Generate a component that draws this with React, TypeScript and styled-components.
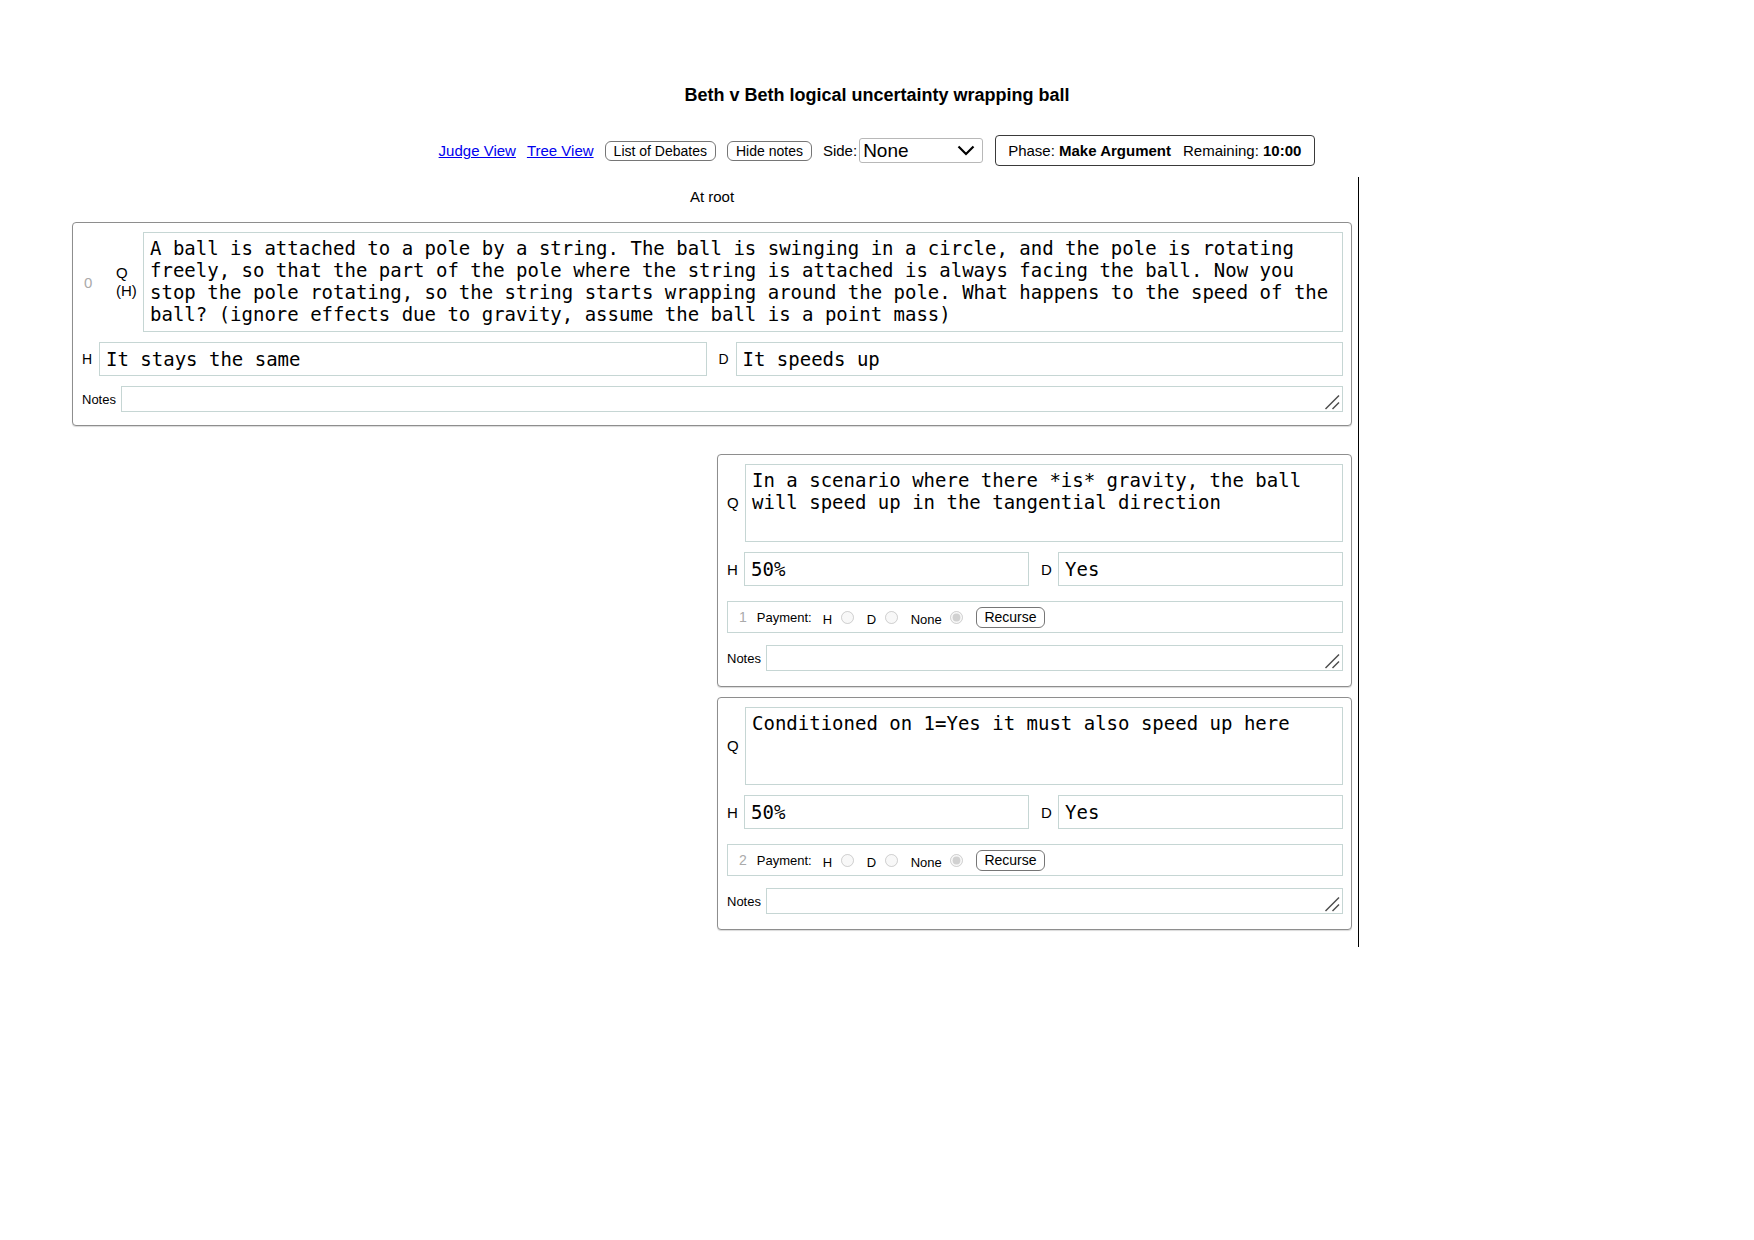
import styled, { createGlobalStyle } from "styled-components";

const GlobalStyle = createGlobalStyle`
  body {
    margin: 0;
    background: #fff;
    color: #000;
    font-family: "Liberation Sans", Arial, sans-serif;
  }
`;

const Page = styled.div`
  padding-top: 85px;
  width: 1754px;
`;

const Title = styled.h1`
  margin: 0;
  text-align: center;
  font-size: 18px;
  line-height: 21px;
  font-weight: 700;
`;

const Toolbar = styled.div`
  margin-top: 29px;
  display: flex;
  justify-content: center;
  align-items: center;
  gap: 11px;
  font-size: 15px;
  & > a {
    color: #0000ee;
    text-decoration: underline;
  }
`;

const PillButton = styled.button`
  height: 20px;
  padding: 0 8px;
  font-family: "Liberation Sans", Arial, sans-serif;
  font-size: 14px;
  color: #000;
  background: #fff;
  border: 1px solid #767676;
  border-radius: 6px;
`;

const SideGroup = styled.div`
  display: flex;
  align-items: center;
  gap: 2px;
`;

const SelectBox = styled.div`
  width: 124px;
  height: 25px;
  box-sizing: border-box;
  display: flex;
  align-items: center;
  justify-content: space-between;
  padding: 0 7px 0 3px;
  border: 1px solid #b8b8b8;
  border-radius: 3px;
  font-size: 19px;
`;

const PhaseBox = styled.div`
  margin-left: 1px;
  height: 31px;
  box-sizing: border-box;
  display: flex;
  align-items: center;
  padding: 0 13px 0 12px;
  border: 1.5px solid #3a3a3a;
  border-radius: 4px;
  font-size: 15px;
  b {
    font-weight: 700;
  }
  .remaining {
    margin-left: 12px;
  }
`;

const LeftColumn = styled.div`
  margin-top: 11px;
  margin-left: 64px;
  width: 1295px;
  box-sizing: border-box;
  padding: 0 6px 17px 8px;
  border-right: 1px solid #000;
`;

const AtRoot = styled.div`
  padding-top: 11px;
  text-align: center;
  font-size: 15px;
  line-height: 17px;
`;

const NodeBox = styled.div<{ $root?: boolean }>`
  margin-top: ${(p) => (p.$root ? "17px" : "0")};
  border: 1px solid #8e8e8e;
  border-radius: 4px;
  box-shadow: 0 1px 1px rgba(0, 0, 0, 0.15);
  padding: 9px 8px ${(p) => (p.$root ? 13 : 15)}px 9px;
  display: flex;
  flex-direction: column;
  background: #fff;
`;

const Children = styled.div`
  margin-top: 28px;
  padding-left: calc(50% + 5px);
  display: flex;
  flex-direction: column;
  gap: 10px;
`;

const Row = styled.div`
  display: flex;
  align-items: center;
`;

const IndexCell = styled.div`
  width: 34px;
  box-sizing: border-box;
  padding-left: 2px;
  color: #aaa;
  font-size: 15px;
`;

const QLabel = styled.div<{ $w: number }>`
  width: ${(p) => p.$w}px;
  flex-shrink: 0;
  font-size: 15px;
  line-height: 18px;
`;

const field = `
  box-sizing: border-box;
  border: 1px solid #c6d6d4;
  border-radius: 0;
  background: #fff;
  color: #000;
  outline: none;
`;

const QText = styled.textarea<{ $h: number }>`
  ${field}
  flex: 1;
  height: ${(p) => p.$h}px;
  padding: 4px 6px;
  margin: 0;
  font-family: "DejaVu Sans Mono", monospace;
  font-size: 19px;
  line-height: 22px;
  resize: none;
  overflow: hidden;
`;

const AnswerRow = styled.div`
  margin-top: 10px;
  display: grid;
  grid-template-columns: 1fr 1fr;
  column-gap: 12px;
`;

const SideLabel = styled.div<{ $small?: boolean }>`
  width: 17px;
  flex-shrink: 0;
  font-size: ${(p) => (p.$small ? 14 : 15)}px;
`;

const AnswerInput = styled.input`
  ${field}
  flex: 1;
  min-width: 0;
  height: 34px;
  margin: 0;
  padding: 0 6px;
  font-family: "DejaVu Sans Mono", monospace;
  font-size: 19px;
`;

const PaymentRow = styled.div`
  margin-top: 15px;
  height: 32px;
  box-sizing: border-box;
  display: flex;
  align-items: center;
  padding: 0 11px;
  border: 1px solid #c6d6d4;
  font-size: 13px;
  & > .idx {
    color: #aaa;
    font-size: 14px;
    margin-right: 10px;
  }
  label {
    margin-left: 10px;
  }
  label:first-of-type {
    margin-left: 11px;
  }
  input[type="radio"] {
    margin: 3px 3px 0 5px;
  }
`;

const RecurseButton = styled.button`
  margin-left: 10px;
  height: 21px;
  padding: 0 7px;
  font-family: "Liberation Sans", Arial, sans-serif;
  font-size: 14px;
  color: #000;
  background: #fff;
  border: 1px solid #767676;
  border-radius: 6px;
`;

const NotesRow = styled.div<{ $gap: number }>`
  margin-top: ${(p) => p.$gap}px;
  display: flex;
  align-items: center;
  & > span {
    font-size: 13px;
    margin-right: 5px;
  }
`;

const NotesWrap = styled.div`
  flex: 1;
  position: relative;
  display: flex;
  svg {
    position: absolute;
    right: 3px;
    bottom: 2px;
    pointer-events: none;
  }
`;

const NotesArea = styled.textarea`
  ${field}
  flex: 1;
  height: 26px;
  margin: 0;
  padding: 2px 4px;
  font-family: "Liberation Sans", Arial, sans-serif;
  font-size: 13px;
  resize: none;
  overflow: hidden;
`;

const Notes = () => (
  <NotesWrap>
    <NotesArea />
    <svg width="16" height="16" viewBox="0 0 16 16">
      <line x1="1.5" y1="15" x2="15" y2="1.5" stroke="#4a4a4a" strokeWidth="1.4" />
      <line x1="8.5" y1="15" x2="15" y2="8.5" stroke="#4a4a4a" strokeWidth="1.4" />
    </svg>
  </NotesWrap>
);

interface PropsChild {
  index: number;
  question: string;
  honest: string;
  dishonest: string;
}

const children: PropsChild[] = [
  {
    index: 1,
    question:
      "In a scenario where there *is* gravity, the ball will speed up in the tangential direction",
    honest: "50%",
    dishonest: "Yes",
  },
  {
    index: 2,
    question: "Conditioned on 1=Yes it must also speed up here",
    honest: "50%",
    dishonest: "Yes",
  },
];

const ChildNode = ({ index, question, honest, dishonest }: PropsChild) => {
  return (
    <NodeBox>
      <Row>
        <QLabel $w={18}>Q</QLabel>
        <QText $h={78} defaultValue={question} spellCheck={false} />
      </Row>
      <AnswerRow>
        <Row>
          <SideLabel>H</SideLabel>
          <AnswerInput defaultValue={honest} spellCheck={false} />
        </Row>
        <Row>
          <SideLabel>D</SideLabel>
          <AnswerInput defaultValue={dishonest} spellCheck={false} />
        </Row>
      </AnswerRow>
      <PaymentRow>
        <span className="idx">{index}</span>
        <span>Payment:</span>
        <label>
          H <input type="radio" name={`pay${index}`} disabled />
        </label>
        <label>
          D <input type="radio" name={`pay${index}`} disabled />
        </label>
        <label>
          None{" "}
          <input type="radio" name={`pay${index}`} disabled defaultChecked />
        </label>
        <RecurseButton>Recurse</RecurseButton>
      </PaymentRow>
      <NotesRow $gap={12}>
        <span>Notes</span>
        <Notes />
      </NotesRow>
    </NodeBox>
  );
};

const rootQuestion =
  "A ball is attached to a pole by a string. The ball is swinging in a circle, and the pole is rotating freely, so that the part of the pole where the string is attached is always facing the ball. Now you stop the pole rotating, so the string starts wrapping around the pole. What happens to the speed of the ball? (ignore effects due to gravity, assume the ball is a point mass)";

const App = () => {
  return (
    <Page>
      <GlobalStyle />
      <Title>Beth v Beth logical uncertainty wrapping ball</Title>
      <Toolbar>
        <a href="#">Judge View</a>
        <a href="#">Tree View</a>
        <PillButton>List of Debates</PillButton>
        <PillButton>Hide notes</PillButton>
        <SideGroup>
          <span>Side:</span>
          <SelectBox>
            <span>None</span>
            <svg width="18" height="11" viewBox="0 0 18 11">
              <polyline
                points="1.5,1.5 9,9 16.5,1.5"
                fill="none"
                stroke="#000"
                strokeWidth="2.2"
              />
            </svg>
          </SelectBox>
        </SideGroup>
        <PhaseBox>
          <span>
            Phase: <b>Make Argument</b>
          </span>
          <span className="remaining">
            Remaining: <b>10:00</b>
          </span>
        </PhaseBox>
      </Toolbar>
      <LeftColumn>
        <AtRoot>At root</AtRoot>
        <NodeBox $root>
          <Row>
            <IndexCell>0</IndexCell>
            <QLabel $w={27}>
              Q
              <br />
              (H)
            </QLabel>
            <QText $h={100} defaultValue={rootQuestion} spellCheck={false} />
          </Row>
          <AnswerRow>
            <Row>
              <SideLabel $small>H</SideLabel>
              <AnswerInput defaultValue="It stays the same" spellCheck={false} />
            </Row>
            <Row>
              <SideLabel $small>D</SideLabel>
              <AnswerInput defaultValue="It speeds up" spellCheck={false} />
            </Row>
          </AnswerRow>
          <NotesRow $gap={10}>
            <span>Notes</span>
            <Notes />
          </NotesRow>
        </NodeBox>
        <Children>
          {children.map((c) => (
            <ChildNode key={c.index} {...c} />
          ))}
        </Children>
      </LeftColumn>
    </Page>
  );
};

export default App;
